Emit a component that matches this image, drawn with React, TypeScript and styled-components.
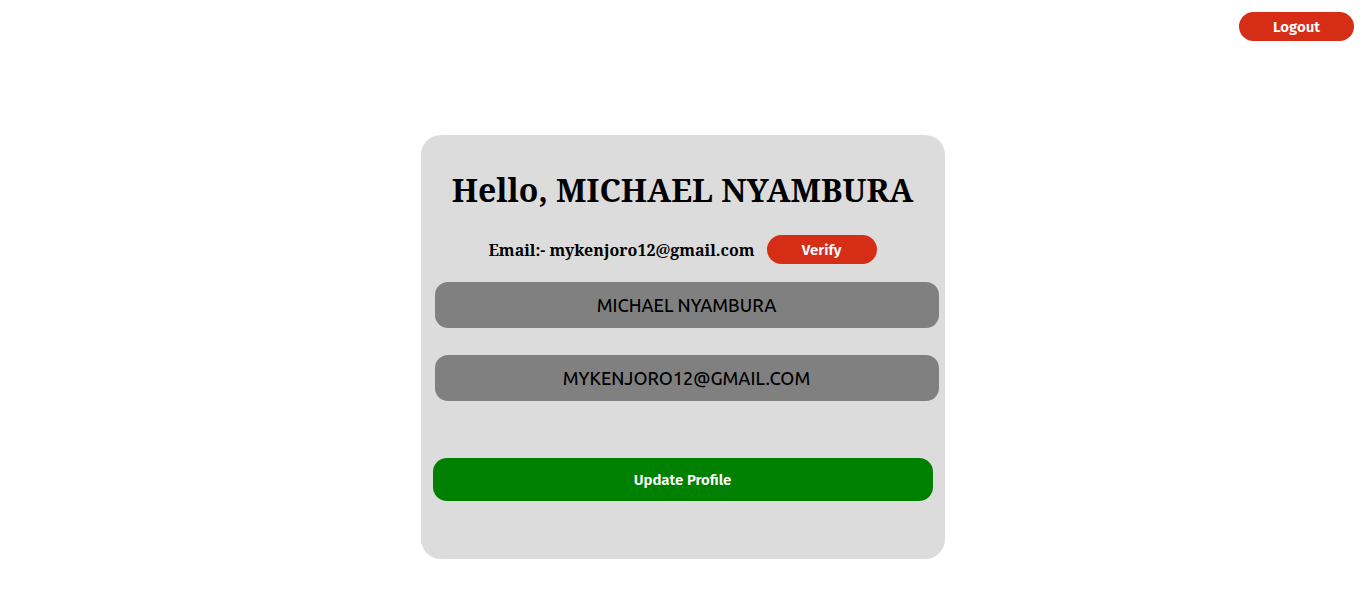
import React from "react";
import styled, { createGlobalStyle } from "styled-components";

const Global = createGlobalStyle`
  html, body { margin: 0; padding: 0; background: #ffffff; }
  body { font-family: "Noto Serif", "DejaVu Serif", serif; }
`;

const Page = styled.div`
  width: 1365px;
  height: 602px;
  display: flex;
  flex-direction: column;
  box-sizing: border-box;
  padding: 12px 11px 0 0;
`;

const TopBar = styled.div`
  display: flex;
  justify-content: flex-end;
`;

const PillButton = styled.button<{ $w: number }>`
  width: ${(p) => p.$w}px;
  height: 29px;
  border: none;
  border-radius: 15px;
  background: #d62d17;
  color: #ffffff;
  font-family: "Fira Sans", "Open Sans", sans-serif;
  font-weight: 600;
  font-size: 15px;
  display: flex;
  align-items: center;
  justify-content: center;
  padding: 0;
  flex-shrink: 0;
  cursor: pointer;
`;

const Center = styled.div`
  display: flex;
  justify-content: center;
  margin-top: 94px;
  padding-left: 11px;
`;

const Card = styled.div`
  width: 524px;
  height: 424px;
  box-sizing: border-box;
  background: #dcdcdc;
  border-radius: 20px;
  display: flex;
  flex-direction: column;
  align-items: center;
  padding: 33px 12px 0;
`;

const Title = styled.h1`
  margin: 0;
  font-family: "Noto Serif", "DejaVu Serif", serif;
  font-weight: 700;
  font-size: 32px;
  line-height: 44px;
  color: #000;
  white-space: nowrap;
`;

const EmailRow = styled.div`
  display: flex;
  align-items: center;
  gap: 12px;
  margin-top: 23px;
`;

const EmailText = styled.span`
  font-family: "Noto Serif", "DejaVu Serif", serif;
  font-weight: 700;
  font-size: 16px;
  color: #000;
  white-space: nowrap;
`;

const Field = styled.div<{ $top: number }>`
  align-self: flex-start;
  width: 504px;
  height: 46px;
  margin-top: ${(p) => p.$top}px;
  margin-left: 2px;
  background: #808080;
  border-radius: 13px;
  display: flex;
  align-items: center;
  justify-content: center;
  font-family: "Ubuntu", "Open Sans", sans-serif;
  font-weight: 500;
  font-size: 18px;
  color: #000;
  flex-shrink: 0;
`;

const UpdateButton = styled.button`
  align-self: stretch;
  height: 43px;
  margin-top: 57px;
  border: none;
  border-radius: 14px;
  background: #008000;
  color: #ffffff;
  font-family: "Fira Sans", "Open Sans", sans-serif;
  font-weight: 600;
  font-size: 15px;
  cursor: pointer;
  flex-shrink: 0;
`;

export default function App() {
  return (
    <>
      <Global />
      <Page>
        <TopBar>
          <PillButton $w={115}>Logout</PillButton>
        </TopBar>
        <Center>
          <Card>
            <Title>Hello, MICHAEL NYAMBURA</Title>
            <EmailRow>
              <EmailText>Email:- mykenjoro12@gmail.com</EmailText>
              <PillButton $w={110}>Verify</PillButton>
            </EmailRow>
            <Field $top={18}>MICHAEL NYAMBURA</Field>
            <Field $top={27}>MYKENJORO12@GMAIL.COM</Field>
            <UpdateButton>Update Profile</UpdateButton>
          </Card>
        </Center>
      </Page>
    </>
  );
}
